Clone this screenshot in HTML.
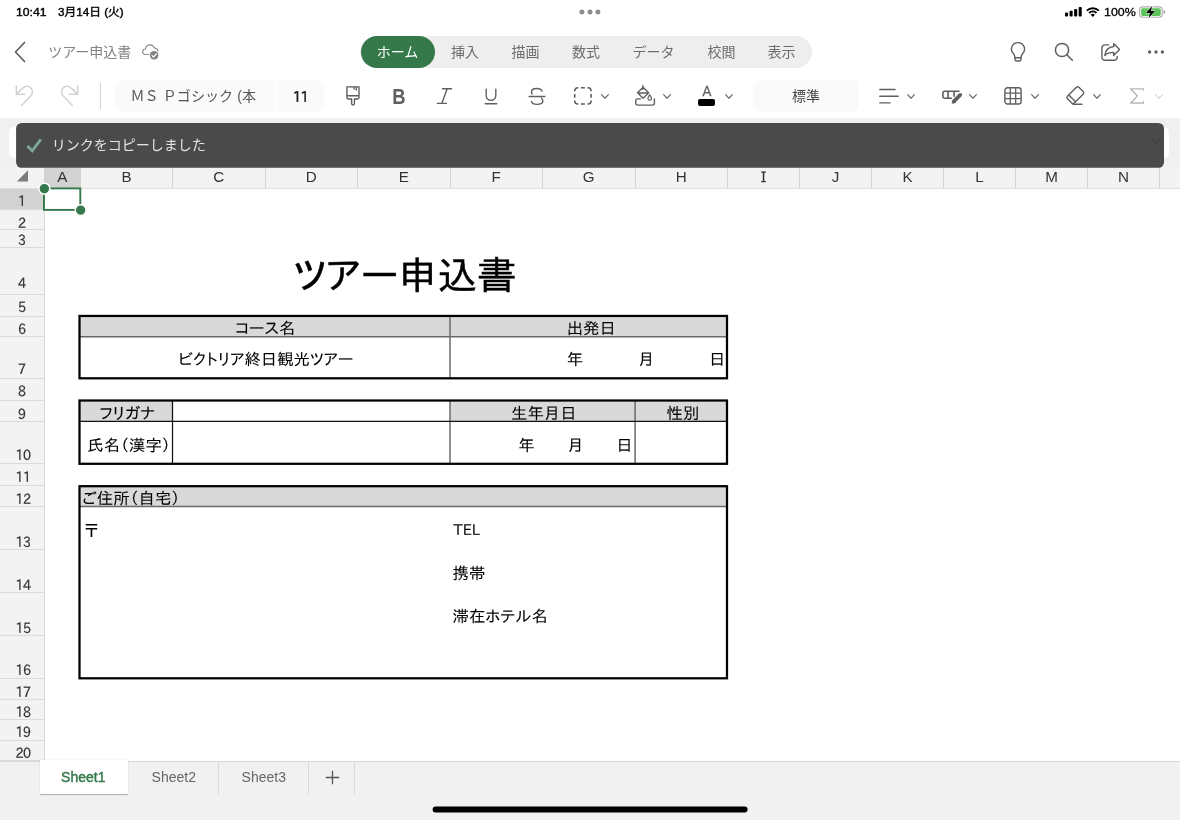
<!DOCTYPE html>
<html lang="ja">
<head>
<meta charset="utf-8">
<title>ツアー申込書</title>
<style>
*{box-sizing:border-box;margin:0;padding:0}
html,body{width:1180px;height:820px;overflow:hidden;background:#fff}
body{position:relative;font-family:"Liberation Sans","Noto Sans CJK JP",sans-serif;color:#000}
#root{position:absolute;left:0;top:0;width:1180px;height:820px;overflow:hidden;background:#fff;will-change:transform}
.a{position:absolute}
.t{position:absolute;white-space:nowrap;line-height:1}
.c{transform:translateX(-50%)}
svg{position:absolute;overflow:visible}
.ui{font-family:"Liberation Sans","Noto Sans CJK JP",sans-serif}
.tab{font-size:14px;color:#6e6e6e;top:45px}
.ch{font-size:15.2px;color:#333;top:167.5px}
.rh{font-family:"IPAPGothic","IPAGothic","Liberation Sans",sans-serif;font-size:14.2px;color:#333;-webkit-text-stroke:0.25px #333}
.cell{font-family:"IPAPGothic","IPAGothic","Noto Sans CJK JP",sans-serif;font-size:16.4px;letter-spacing:0;color:#000;-webkit-text-stroke:0.08px #000;transform:scaleY(0.975)}
.st{font-size:14px;color:#666;top:770px}
</style>
</head>
<body>
<div id="root">
<div class="t " style="left:16px;top:6.6px;font-weight:400;color:#000;-webkit-text-stroke:0.4px #000;transform-origin:0 50%;font-size:11.2px;transform:scaleX(1.09)">10:41</div>
<div class="t " style="left:58px;top:6.6px;font-weight:400;color:#000;-webkit-text-stroke:0.4px #000;transform-origin:0 50%;font-size:11.3px;transform:scaleX(1.035)">3月14日 (火)</div>
<svg style="left:576px;top:6px" width="28" height="12" viewBox="0 0 28 12" ><circle cx="5.9" cy="5.9" r="2.5" fill="#8e8e8e"/><circle cx="14" cy="5.9" r="2.5" fill="#8e8e8e"/><circle cx="21.9" cy="5.9" r="2.5" fill="#8e8e8e"/></svg>
<svg style="left:1065px;top:7px" width="17" height="10" viewBox="0 0 17 10" ><rect x="0" y="5.6" width="3.1" height="3.9" rx="0.9"/><rect x="4.55" y="3.7" width="3.1" height="5.8" rx="0.9"/><rect x="9.1" y="1.9" width="3.1" height="7.6" rx="0.9"/><rect x="13.65" y="0.1" width="3.1" height="9.4" rx="0.9"/></svg>
<svg style="left:1085.8px;top:6.6px" width="13.6" height="10" viewBox="0 0 13.6 10" ><path d="M6.8 9.9 L4.7 7.7 A3 3 0 0 1 8.9 7.7 Z"/><path d="M3.1 6.0 A5.3 5.3 0 0 1 10.5 6.0" fill="none" stroke="#000" stroke-width="1.9"/><path d="M0.8 3.7 A8.5 8.5 0 0 1 12.8 3.7" fill="none" stroke="#000" stroke-width="1.9"/></svg>
<div class="t " style="left:1103.8px;top:6.7px;font-size:11.3px;font-weight:400;color:#000;-webkit-text-stroke:0.3px #000;transform-origin:0 50%;transform:scaleX(1.1)">100%</div>
<svg style="left:1138.6px;top:6px" width="27" height="12" viewBox="0 0 27 12" ><rect x="0.6" y="0.9" width="22.6" height="10.4" rx="3" fill="none" stroke="#b0b0b0" stroke-width="1.1"/><rect x="2.1" y="2.3" width="19.6" height="7.6" rx="1.6" fill="#5dc35b"/><path d="M24.5 4.1 v4 c1.2 -0.3 1.8 -1.1 1.8 -2 s-0.6 -1.7 -1.8 -2z" fill="#a6a6a6"/><path d="M13.2 0 L7 6.9 H10.9 L9.5 12 L16 5.1 H12 Z" fill="#000" stroke="#fff" stroke-width="0.9" paint-order="stroke"/></svg>
<svg style="left:14px;top:41px" width="12" height="22" viewBox="0 0 12 22" ><path d="M10.5 1.5 L1.5 11 L10.5 20.5" fill="none" stroke="#5f5f5f" stroke-width="1.7" stroke-linecap="round" stroke-linejoin="round"/></svg>
<div class="t " style="left:48.2px;top:44.5px;font-size:14px;color:#848484">ツアー申込書</div>
<svg style="left:141px;top:43px" width="20" height="18" viewBox="0 0 20 18" ><path d="M7.6 11.5 H4.4 A2.75 2.75 0 0 1 4.5 6.0 A4.5 4.5 0 0 1 13.3 5.0 A3.5 3.5 0 0 1 16.9 8.1" fill="none" stroke="#8c8c8c" stroke-width="1.2" stroke-linecap="round"/><circle cx="13.1" cy="12.3" r="5.1" fill="#fff"/><circle cx="13.1" cy="12.3" r="4.3" fill="#828282"/><path d="M11 12.6 l1.5 1.5 l2.7 -3.1" fill="none" stroke="#fff" stroke-width="1.2" stroke-linecap="round" stroke-linejoin="round"/></svg>
<div class="a" style="left:360px;top:36px;width:452px;height:32px;background:#eeeeee;border-radius:16px"></div>
<div class="a" style="left:361px;top:36px;width:74px;height:32px;background:#35794a;border-radius:16px"></div>
<div class="t tab c" style="left:397.5px;top:45px;color:#fff">ホーム</div>
<div class="t tab c" style="left:465px;top:45px;">挿入</div>
<div class="t tab c" style="left:525.5px;top:45px;">描画</div>
<div class="t tab c" style="left:586px;top:45px;">数式</div>
<div class="t tab c" style="left:653.4px;top:45px;">データ</div>
<div class="t tab c" style="left:721.4px;top:45px;">校閲</div>
<div class="t tab c" style="left:781.4px;top:45px;">表示</div>
<svg style="left:1009px;top:41px" width="18" height="22" viewBox="0 0 18 22" ><path d="M9 1.6 A6.5 6.5 0 0 0 4.3 12.6 C5.2 13.5 5.6 14.3 5.7 15.4 L6.1 18.6 A1.5 1.5 0 0 0 7.6 20 H10.4 A1.5 1.5 0 0 0 11.9 18.6 L12.3 15.4 C12.4 14.3 12.8 13.5 13.7 12.6 A6.5 6.5 0 0 0 9 1.6 Z M5.9 16.7 H12.1" fill="none" stroke="#5f5f5f" stroke-width="1.4" stroke-linejoin="round"/></svg>
<svg style="left:1054px;top:42px" width="20" height="20" viewBox="0 0 20 20" ><circle cx="8" cy="8" r="6.6" fill="none" stroke="#5f5f5f" stroke-width="1.5"/><path d="M12.8 12.8 L18.3 18.3" stroke="#5f5f5f" stroke-width="1.6" stroke-linecap="round"/></svg>
<svg style="left:1100px;top:42px" width="20" height="20" viewBox="0 0 20 20" ><path d="M8.6 2.9 H4.9 A3 3 0 0 0 1.9 5.9 V15.3 A3 3 0 0 0 4.9 18.3 H14.2 A3 3 0 0 0 17.2 15.3 V14.4" fill="none" stroke="#5f5f5f" stroke-width="1.4" stroke-linecap="round"/><path d="M13.7 1.6 L19.5 7.4 L13.7 13.4 V10.4 C9.6 10.4 6.9 11.3 4.8 13.4 C5.4 8.6 8.6 5 13.7 4.5 Z" fill="none" stroke="#5f5f5f" stroke-width="1.4" stroke-linejoin="round"/></svg>
<svg style="left:1140px;top:45px" width="32" height="14" viewBox="0 0 32 14" ><circle cx="9.6" cy="7" r="1.65" fill="#5f5f5f"/><circle cx="16" cy="7" r="1.65" fill="#5f5f5f"/><circle cx="22.4" cy="7" r="1.65" fill="#5f5f5f"/></svg>
<svg style="left:15px;top:85px" width="20" height="22" viewBox="0 0 20 22" ><path d="M1.3 1.1 V9.2 H9.7 M1.6 8.9 L8.1 2.9 A5.5 5.5 0 0 1 15.9 10.7 L6.6 20.4" fill="none" stroke="#d2d2d2" stroke-width="1.5" stroke-linecap="round" stroke-linejoin="round"/></svg>
<svg style="left:58.9px;top:85px" width="20" height="22" viewBox="0 0 20 22" ><path transform="translate(20,0) scale(-1,1)" d="M1.3 1.1 V9.2 H9.7 M1.6 8.9 L8.1 2.9 A5.5 5.5 0 0 1 15.9 10.7 L6.6 20.4" fill="none" stroke="#d2d2d2" stroke-width="1.5" stroke-linecap="round" stroke-linejoin="round"/></svg>
<div class="a" style="left:100px;top:83px;width:1px;height:26px;background:#d4d4d4;"></div>
<div class="a" style="left:115px;top:80px;width:160px;height:32px;background:#fafafa;border-radius:7px 0 0 7px"></div>
<div class="a" style="left:276.5px;top:80px;width:47px;height:32px;background:#fafafa;border-radius:0 7px 7px 0"></div>
<div class="t " style="left:130.5px;top:88.5px;font-size:14px;color:#555;letter-spacing:0.1px">ＭＳ Ｐゴシック (本</div>
<div class="a" style="left:257px;top:82px;width:18px;height:28px;background:linear-gradient(to right, rgba(250,250,250,0), #fafafa 70%);"></div>
<div class="t  c" style="left:300.2px;top:89.8px;font-family:'IPAPGothic','IPAGothic','Liberation Sans',sans-serif;font-size:14.5px;color:#1c1c1c;letter-spacing:-1.5px;-webkit-text-stroke:0.35px #1c1c1c;line-height:1">11</div>
<svg style="left:345px;top:85px" width="16" height="22" viewBox="0 0 16 22" ><path d="M1.9 1.9 H14 V12.6 A1.4 1.4 0 0 1 12.6 14 H9.4 V18.6 A1.4 1.4 0 0 1 6.6 18.6 V14 H3.3 A1.4 1.4 0 0 1 1.9 12.6 Z M1.9 10.7 H14 M11.3 1.9 V5.4 M9 1.9 V4.4" fill="none" stroke="#5f5f5f" stroke-width="1.4" stroke-linejoin="round"/></svg>
<div class="t " style="left:399.2px;top:86.6px;font-size:21.4px;font-weight:700;color:#5f5f5f;transform:translateX(-50%) scaleX(0.86)">B</div>
<svg style="left:436px;top:87px" width="17" height="18" viewBox="0 0 17 18" ><path d="M6.5 1.8 H15.6 M1.4 16.4 H10.4 M11.2 1.8 L5.8 16.4" fill="none" stroke="#5f5f5f" stroke-width="1.4" stroke-linecap="round"/></svg>
<svg style="left:484px;top:88px" width="14" height="18" viewBox="0 0 14 18" ><path d="M2.2 1.2 V7.6 A4.8 4.8 0 0 0 11.8 7.6 V1.2 M1.2 15.8 H12.8" fill="none" stroke="#5f5f5f" stroke-width="1.4" stroke-linecap="round"/></svg>
<svg style="left:528px;top:86px" width="18" height="20" viewBox="0 0 18 20" ><path d="M14 5.2 C13.4 3.4 11.2 2.5 8.7 2.5 C5.7 2.5 3.5 3.9 3.5 6 C3.5 6.8 3.7 7.4 4.2 8 M1.1 10.5 H16.8 M13.5 12.3 C14.4 13 14.8 14 14.8 15 C14.8 17 12.4 18.4 8.8 18.4 C6 18.4 3.9 17.2 3.4 15.4" fill="none" stroke="#5f5f5f" stroke-width="1.4" stroke-linecap="round"/></svg>
<svg style="left:573px;top:86px" width="20" height="20" viewBox="0 0 20 20" ><path d="M1.75 5.25 V4.75 A3.0 3.0 0 0 1 4.75 1.75 H5.35 M7.95 1.75 H11.85 M14.450000000000001 1.75 H15.05 A3.0 3.0 0 0 1 18.05 4.75 V5.25 M18.05 7.95 V11.85 M18.05 14.55 V15.05 A3.0 3.0 0 0 1 15.05 18.05 H14.450000000000001 M11.85 18.05 H7.95 M5.35 18.05 H4.75 A3.0 3.0 0 0 1 1.75 15.05 V14.55 M1.75 11.85 V7.95" fill="none" stroke="#5f5f5f" stroke-width="1.6"/></svg>
<svg style="left:601px;top:94.2px" width="8" height="4.8" viewBox="0 0 8 4.8" ><path d="M0.6 0.6 L4 4.25 L7.4 0.6" fill="none" stroke="#686868" stroke-width="1.15" stroke-linecap="round" stroke-linejoin="round"/></svg>
<svg style="left:634px;top:84px" width="22" height="23" viewBox="0 0 22 23" ><path d="M8.8 1.4 V5.4 M9.1 3.2 L14.7 8.8 L9.1 14.3 L3.5 8.8 Z M4 9 H14.2" fill="none" stroke="#5f5f5f" stroke-width="1.3" stroke-linejoin="round" stroke-linecap="round"/><path d="M15.7 10.8 c1.1 1.6 1.8 2.6 1.8 3.6 a1.8 1.8 0 0 1 -3.6 0 c0 -1 0.7 -2 1.8 -3.6z" fill="none" stroke="#5f5f5f" stroke-width="1.2" stroke-linejoin="round"/><path d="M6.4 14.9 H3.6 A1.8 1.8 0 0 0 1.8 16.7 V19.3 A1.8 1.8 0 0 0 3.6 21.1 H18.6 A1.8 1.8 0 0 0 20.4 19.3 V15" fill="none" stroke="#5f5f5f" stroke-width="1.4" stroke-linecap="round"/></svg>
<svg style="left:663px;top:94.2px" width="8" height="4.8" viewBox="0 0 8 4.8" ><path d="M0.6 0.6 L4 4.25 L7.4 0.6" fill="none" stroke="#686868" stroke-width="1.15" stroke-linecap="round" stroke-linejoin="round"/></svg>
<div class="t " style="left:706.5px;top:83px;font-size:15px;color:#5f5f5f;-webkit-text-stroke:0.3px #5f5f5f;transform:translateX(-50%) scaleX(0.88)">A</div>
<div class="a" style="left:698.2px;top:98.6px;width:16.8px;height:7px;background:#000;border-radius:2px"></div>
<svg style="left:725px;top:94.2px" width="8" height="4.8" viewBox="0 0 8 4.8" ><path d="M0.6 0.6 L4 4.25 L7.4 0.6" fill="none" stroke="#686868" stroke-width="1.15" stroke-linecap="round" stroke-linejoin="round"/></svg>
<div class="a" style="left:753px;top:80px;width:106px;height:32px;background:#fafafa;border-radius:7px"></div>
<div class="t  c" style="left:806px;top:88.5px;font-size:14px;color:#444">標準</div>
<svg style="left:878px;top:88px" width="22" height="17" viewBox="0 0 22 17" ><path d="M1.8 1.5 H17.1 M1.8 8.2 H20.2 M1.8 14.9 H12.1" fill="none" stroke="#5f5f5f" stroke-width="1.4" stroke-linecap="round"/></svg>
<svg style="left:907px;top:94.2px" width="8" height="4.8" viewBox="0 0 8 4.8" ><path d="M0.6 0.6 L4 4.25 L7.4 0.6" fill="none" stroke="#686868" stroke-width="1.15" stroke-linecap="round" stroke-linejoin="round"/></svg>
<svg style="left:941px;top:89px" width="24" height="16" viewBox="0 0 24 16" ><path d="M18 2.2 H3.7 A1.85 1.85 0 0 0 1.85 4.05 V7.45 A1.85 1.85 0 0 0 3.7 9.3 H10.4 M7.1 2.2 V9.3 M13.1 2.2 V7.2" fill="none" stroke="#5f5f5f" stroke-width="1.6" stroke-linecap="round"/><path d="M19.3 5.9 L12.6 12.6" fill="none" stroke="#5f5f5f" stroke-width="3.7" stroke-linecap="round"/><path d="M13.9 10.8 L10.3 14.7 L15.2 13.4 Z" fill="#5f5f5f"/></svg>
<svg style="left:969px;top:94.2px" width="8" height="4.8" viewBox="0 0 8 4.8" ><path d="M0.6 0.6 L4 4.25 L7.4 0.6" fill="none" stroke="#686868" stroke-width="1.15" stroke-linecap="round" stroke-linejoin="round"/></svg>
<svg style="left:1004px;top:87px" width="18" height="18" viewBox="0 0 18 18" ><rect x="0.9" y="0.8" width="16.2" height="16.2" rx="2.6" fill="none" stroke="#5f5f5f" stroke-width="1.4"/><path d="M6.3 0.8 V17 M11.7 0.8 V17 M0.9 6.2 H17.1 M0.9 11.6 H17.1" fill="none" stroke="#5f5f5f" stroke-width="1.3"/></svg>
<svg style="left:1031px;top:94.2px" width="8" height="4.8" viewBox="0 0 8 4.8" ><path d="M0.6 0.6 L4 4.25 L7.4 0.6" fill="none" stroke="#686868" stroke-width="1.15" stroke-linecap="round" stroke-linejoin="round"/></svg>
<svg style="left:1065px;top:85px" width="22" height="21" viewBox="0 0 22 21" ><g fill="none" stroke="#5f5f5f" stroke-width="1.4" stroke-linecap="round"><g transform="rotate(45 10.3 10.2)"><rect x="5.5" y="2.1" width="9.6" height="16.2" rx="1.8"/><path d="M5.5 14.6 H15.1"/></g><path d="M8.2 19.3 H16.9"/></g></svg>
<svg style="left:1093px;top:94.2px" width="8" height="4.8" viewBox="0 0 8 4.8" ><path d="M0.6 0.6 L4 4.25 L7.4 0.6" fill="none" stroke="#686868" stroke-width="1.15" stroke-linecap="round" stroke-linejoin="round"/></svg>
<svg style="left:1129px;top:87px" width="16" height="18" viewBox="0 0 16 18" ><path d="M14.5 3.1 V1.9 H1.7 L8.4 8.9 L1.7 16 H14.5 V14.8" fill="none" stroke="#b6b6b6" stroke-width="1.4" stroke-linejoin="round" stroke-linecap="round"/></svg>
<svg style="left:1155px;top:94.2px" width="8" height="4.8" viewBox="0 0 8 4.8" ><path d="M0.6 0.6 L4 4.25 L7.4 0.6" fill="none" stroke="#d8d8d8" stroke-width="1.15" stroke-linecap="round" stroke-linejoin="round"/></svg>
<div class="a" style="left:0px;top:118px;width:1180px;height:50px;background:#f0f0f0;"></div>
<div class="a" style="left:8.5px;top:127px;width:1160.5px;height:31px;background:#fff;border-radius:5px"></div>
<svg style="left:0px;top:118px" width="1180" height="52" viewBox="0 0 1180 52" ><rect x="16.1" y="4.9" width="1147.9" height="44.9" rx="5.5" fill="#4a4a4a"/></svg>
<svg style="left:1150.6px;top:138px" width="10" height="6" viewBox="0 0 10 6" ><path d="M0.6 0.6 L5 4.8 L9.4 0.6" fill="none" stroke="#424242" stroke-width="1.2" stroke-linecap="round" stroke-linejoin="round"/></svg>
<svg style="left:26px;top:138px" width="17" height="15" viewBox="0 0 17 15" ><path d="M1.4 8 L6.2 12.8 L14.8 1.4" fill="none" stroke="#7fa898" stroke-width="2.8" stroke-linejoin="miter"/></svg>
<div class="t " style="left:51.8px;top:138px;font-size:14px;color:#e4e4e4">リンクをコピーしました</div>
<div class="a" style="left:0px;top:168px;width:1180px;height:21px;background:#f3f3f3;"></div>
<div class="a" style="left:0px;top:187.6px;width:1180px;height:1.6px;background:#e0e0e0;"></div>
<div class="a" style="left:44px;top:168px;width:36.5px;height:20px;background:#d2d2d2;"></div>
<svg style="left:16px;top:170px" width="13" height="12" viewBox="0 0 13 12" ><path d="M12 0.2 V11.6 H0.8 Z" fill="#7c7c7c"/></svg>
<div class="t ch c" style="left:62.25px;top:169.2px;">A</div>
<div class="t ch c" style="left:126.5px;top:169.2px;">B</div>
<div class="t ch c" style="left:218.75px;top:169.2px;">C</div>
<div class="t ch c" style="left:311.25px;top:169.2px;">D</div>
<div class="t ch c" style="left:403.75px;top:169.2px;">E</div>
<div class="t ch c" style="left:496.25px;top:169.2px;">F</div>
<div class="t ch c" style="left:588.75px;top:169.2px;">G</div>
<div class="t ch c" style="left:681.25px;top:169.2px;">H</div>
<div class="t ch c" style="left:763.5px;top:169.9px;font-family:'IPAGothic','Liberation Sans',sans-serif;font-size:15.2px;-webkit-text-stroke:0.1px #333">I</div>
<div class="t ch c" style="left:835.5px;top:169.2px;">J</div>
<div class="t ch c" style="left:907.5px;top:169.2px;">K</div>
<div class="t ch c" style="left:979.5px;top:169.2px;">L</div>
<div class="t ch c" style="left:1051.5px;top:169.2px;">M</div>
<div class="t ch c" style="left:1123.5px;top:169.2px;">N</div>
<div class="a" style="left:172.0px;top:168px;width:1px;height:20px;background:#d4d4d4;"></div>
<div class="a" style="left:264.5px;top:168px;width:1px;height:20px;background:#d4d4d4;"></div>
<div class="a" style="left:357.0px;top:168px;width:1px;height:20px;background:#d4d4d4;"></div>
<div class="a" style="left:449.5px;top:168px;width:1px;height:20px;background:#d4d4d4;"></div>
<div class="a" style="left:542.0px;top:168px;width:1px;height:20px;background:#d4d4d4;"></div>
<div class="a" style="left:634.5px;top:168px;width:1px;height:20px;background:#d4d4d4;"></div>
<div class="a" style="left:727.0px;top:168px;width:1px;height:20px;background:#d4d4d4;"></div>
<div class="a" style="left:799.0px;top:168px;width:1px;height:20px;background:#d4d4d4;"></div>
<div class="a" style="left:871.0px;top:168px;width:1px;height:20px;background:#d4d4d4;"></div>
<div class="a" style="left:943.0px;top:168px;width:1px;height:20px;background:#d4d4d4;"></div>
<div class="a" style="left:1015.0px;top:168px;width:1px;height:20px;background:#d4d4d4;"></div>
<div class="a" style="left:1087.0px;top:168px;width:1px;height:20px;background:#d4d4d4;"></div>
<div class="a" style="left:1159.0px;top:168px;width:1px;height:20px;background:#d4d4d4;"></div>
<div class="a" style="left:0px;top:189px;width:44px;height:572px;background:#f3f3f3;"></div>
<div class="a" style="left:44px;top:189px;width:1px;height:572px;background:#dcdcdc;"></div>
<div class="a" style="left:0px;top:189px;width:44px;height:21px;background:#d2d2d2;"></div>
<div class="a" style="left:0px;top:209px;width:44px;height:1px;background:#dadada;"></div>
<div class="t rh" style="left:21.9px;top:194.49px;transform:translateX(-50%) scaleX(0.9);">1</div>
<div class="a" style="left:0px;top:229px;width:44px;height:1px;background:#dadada;"></div>
<div class="t rh" style="left:21.9px;top:215.69px;transform:translateX(-50%) scaleX(0.9);">2</div>
<div class="a" style="left:0px;top:247px;width:44px;height:1px;background:#dadada;"></div>
<div class="t rh" style="left:21.9px;top:232.69px;transform:translateX(-50%) scaleX(0.9);">3</div>
<div class="a" style="left:0px;top:293.5px;width:44px;height:1px;background:#dadada;"></div>
<div class="t rh" style="left:21.9px;top:276.09px;transform:translateX(-50%) scaleX(0.9);">4</div>
<div class="a" style="left:0px;top:315.5px;width:44px;height:1px;background:#dadada;"></div>
<div class="t rh" style="left:21.9px;top:299.89px;transform:translateX(-50%) scaleX(0.9);">5</div>
<div class="a" style="left:0px;top:335.5px;width:44px;height:1px;background:#dadada;"></div>
<div class="t rh" style="left:21.9px;top:322.39px;transform:translateX(-50%) scaleX(0.9);">6</div>
<div class="a" style="left:0px;top:377.5px;width:44px;height:1px;background:#dadada;"></div>
<div class="t rh" style="left:21.9px;top:362.49px;transform:translateX(-50%) scaleX(0.9);">7</div>
<div class="a" style="left:0px;top:400px;width:44px;height:1px;background:#dadada;"></div>
<div class="t rh" style="left:21.9px;top:384.39px;transform:translateX(-50%) scaleX(0.9);">8</div>
<div class="a" style="left:0px;top:420.5px;width:44px;height:1px;background:#dadada;"></div>
<div class="t rh" style="left:21.9px;top:406.59px;transform:translateX(-50%) scaleX(0.9);">9</div>
<div class="a" style="left:0px;top:463px;width:44px;height:1px;background:#dadada;"></div>
<div class="t rh" style="left:23.0px;top:447.79px;transform:translateX(-50%) scaleX(0.9);letter-spacing:-0.5px">10</div>
<div class="a" style="left:0px;top:485px;width:44px;height:1px;background:#dadada;"></div>
<div class="t rh" style="left:23.0px;top:469.69px;transform:translateX(-50%) scaleX(0.9);letter-spacing:-0.5px">11</div>
<div class="a" style="left:0px;top:506px;width:44px;height:1px;background:#dadada;"></div>
<div class="t rh" style="left:23.0px;top:492.09px;transform:translateX(-50%) scaleX(0.9);letter-spacing:-0.5px">12</div>
<div class="a" style="left:0px;top:549px;width:44px;height:1px;background:#dadada;"></div>
<div class="t rh" style="left:23.0px;top:535.19px;transform:translateX(-50%) scaleX(0.9);letter-spacing:-0.5px">13</div>
<div class="a" style="left:0px;top:592px;width:44px;height:1px;background:#dadada;"></div>
<div class="t rh" style="left:23.0px;top:578.29px;transform:translateX(-50%) scaleX(0.9);letter-spacing:-0.5px">14</div>
<div class="a" style="left:0px;top:634.5px;width:44px;height:1px;background:#dadada;"></div>
<div class="t rh" style="left:23.0px;top:621.09px;transform:translateX(-50%) scaleX(0.9);letter-spacing:-0.5px">15</div>
<div class="a" style="left:0px;top:677.5px;width:44px;height:1px;background:#dadada;"></div>
<div class="t rh" style="left:23.0px;top:662.59px;transform:translateX(-50%) scaleX(0.9);letter-spacing:-0.5px">16</div>
<div class="a" style="left:0px;top:698.5px;width:44px;height:1px;background:#dadada;"></div>
<div class="t rh" style="left:23.0px;top:684.59px;transform:translateX(-50%) scaleX(0.9);letter-spacing:-0.5px">17</div>
<div class="a" style="left:0px;top:719px;width:44px;height:1px;background:#dadada;"></div>
<div class="t rh" style="left:23.0px;top:704.69px;transform:translateX(-50%) scaleX(0.9);letter-spacing:-0.5px">18</div>
<div class="a" style="left:0px;top:739.5px;width:44px;height:1px;background:#dadada;"></div>
<div class="t rh" style="left:23.0px;top:725.29px;transform:translateX(-50%) scaleX(0.9);letter-spacing:-0.5px">19</div>
<div class="a" style="left:0px;top:760px;width:44px;height:1px;background:#dadada;"></div>
<div class="t rh" style="left:23.0px;top:745.99px;transform:translateX(-50%) scaleX(0.9);letter-spacing:-0.5px">20</div>
<div id="f-title" class="t cell" style="left:293.40px;top:254.50px;font-size:39.5px;letter-spacing:0;-webkit-text-stroke:0.45px #000">ツアー申込書</div>
<svg style="left:0px;top:0px" width="1180" height="820" viewBox="0 0 1180 820" >
<rect x="80" y="316.5" width="646.5" height="20" fill="#d9d9d9"/>
<rect x="80" y="401" width="92.5" height="20.5" fill="#d9d9d9"/>
<rect x="450" y="401" width="276.5" height="20.5" fill="#d9d9d9"/>
<rect x="80" y="486.8" width="646.5" height="19.5" fill="#d9d9d9"/>
<g fill="none" stroke="#6a6a6a" stroke-width="1.5">
<path d="M80 336.8 H726.5"/><path d="M450 316.5 V377.5"/>
<path d="M450 401 V463"/><path d="M635.1 401 V463"/>
<path d="M80 506.6 H726.5"/>
</g>
<g fill="none" stroke="#111" stroke-width="1.25">
<path d="M80 421.4 H726.5"/><path d="M172.5 401 V463"/>
</g>
<g fill="none" stroke="#000" stroke-width="2.25">
<rect x="79.5" y="315.95" width="647.5" height="62.35"/>
<rect x="79.5" y="400.5" width="647.5" height="63.3"/>
<rect x="79.5" y="486.2" width="647.5" height="192.1"/>
</g></svg>
<div id="f-course" class="t cell" style="left:235.00px;top:320.40px;">コース名</div>
<div id="f-depart" class="t cell" style="left:566.70px;top:320.40px;">出発日</div>
<div id="f-tour" class="t cell" style="left:178.50px;top:350.90px;">ビクトリア終日観光ツアー</div>
<div id="f-y1" class="t cell" style="left:566.70px;top:350.90px;">年</div>
<div id="f-m1" class="t cell" style="left:637.90px;top:350.50px;">月</div>
<div id="f-d1" class="t cell" style="left:708.90px;top:350.50px;">日</div>
<div id="f-furi" class="t cell" style="left:99.50px;top:404.60px;">フリガナ</div>
<div id="f-birth" class="t cell" style="left:511.00px;top:404.70px;">生年月日</div>
<div id="f-sex" class="t cell" style="left:666.60px;top:404.70px;">性別</div>
<div id="f-name" class="t cell" style="left:87.30px;top:437.30px;">氏名（漢字）</div>
<div id="f-y2" class="t cell" style="left:518.30px;top:436.70px;">年</div>
<div id="f-m2" class="t cell" style="left:567.20px;top:436.70px;">月</div>
<div id="f-d2" class="t cell" style="left:616.30px;top:436.70px;">日</div>
<div id="f-addr" class="t cell" style="left:82.20px;top:490.20px;">ご住所（自宅）</div>
<div id="f-post" class="t cell" style="left:83.30px;top:522.30px;">〒</div>
<div id="f-tel" class="t cell" style="left:453.50px;top:522.00px;font-size:15.3px;letter-spacing:0">TEL</div>
<div id="f-mobile" class="t cell" style="left:452.50px;top:565.10px;">携帯</div>
<div id="f-hotel" class="t cell" style="left:452.50px;top:607.90px;">滞在ホテル名</div>
<svg style="left:0px;top:0px" width="120" height="230" viewBox="0 0 120 230" ><rect x="44" y="188.4" width="36.3" height="21.5" fill="none" stroke="#35794a" stroke-width="1.9"/><circle cx="44.35" cy="188.7" r="5.5" fill="#35794a" stroke="#fff" stroke-width="1.5"/><circle cx="80.65" cy="210.1" r="5.4" fill="#35794a" stroke="#fff" stroke-width="1.4"/></svg>
<div class="a" style="left:0px;top:761px;width:1180px;height:59px;background:#f1f1f1;"></div>
<div class="a" style="left:0px;top:760.6px;width:1180px;height:1px;background:#d6d6d6;"></div>
<div class="a" style="left:40px;top:760px;width:88px;height:34px;background:#fff;border-radius:0 0 1px 1px;box-shadow:0 0.5px 1px rgba(0,0,0,.3)"></div>
<div class="t st c" style="left:83.3px;top:770.2px;color:#35794a;-webkit-text-stroke:0.45px #35794a">Sheet1</div>
<div class="t st c" style="left:173.8px;top:770.2px;">Sheet2</div>
<div class="t st c" style="left:263.8px;top:770.2px;">Sheet3</div>
<div class="a" style="left:218px;top:762px;width:1px;height:32px;background:#d9d9d9;"></div>
<div class="a" style="left:308px;top:762px;width:1px;height:32px;background:#d9d9d9;"></div>
<div class="a" style="left:354px;top:762px;width:1px;height:32px;background:#d9d9d9;"></div>
<svg style="left:324.5px;top:770px" width="15" height="15" viewBox="0 0 15 15" ><path d="M7.5 0.8 V14.2 M0.8 7.5 H14.2" fill="none" stroke="#555" stroke-width="1.3"/></svg>
<svg style="left:0px;top:800px" width="1180" height="20" viewBox="0 0 1180 20" ><rect x="432.6" y="6.6" width="315" height="6" rx="3" fill="#000"/></svg>
</div>
</body>
</html>
